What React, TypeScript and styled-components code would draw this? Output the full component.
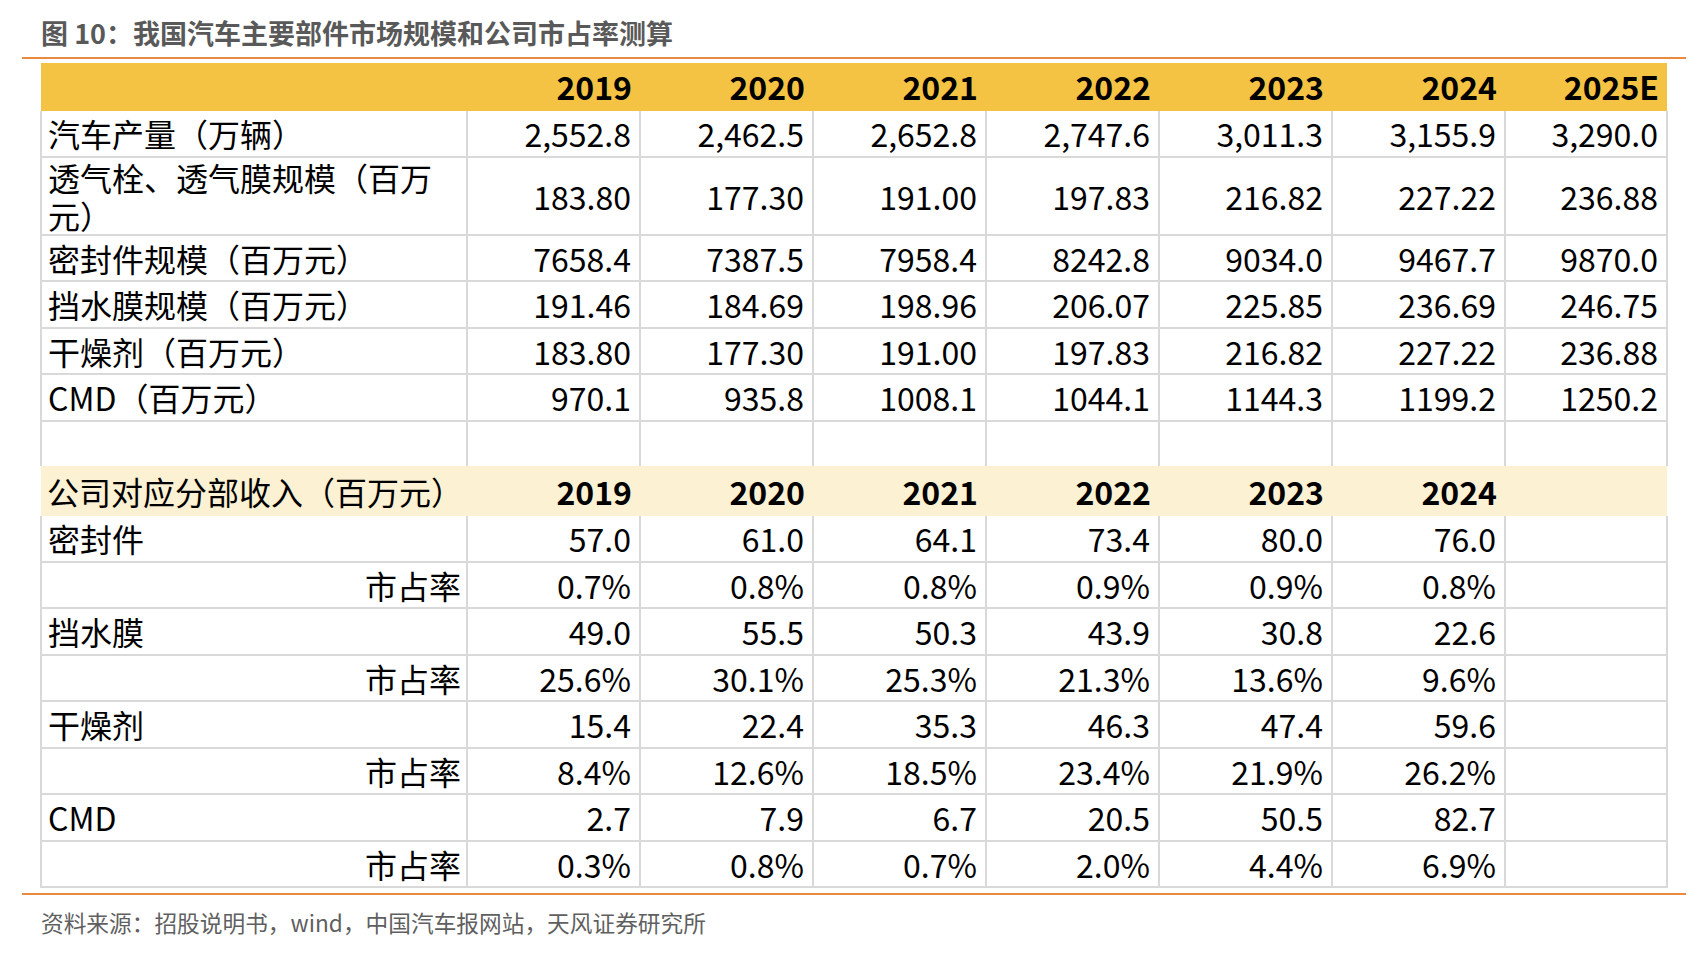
import React from "react";
import styled, { createGlobalStyle } from "styled-components";

const years = ["2019", "2020", "2021", "2022", "2023", "2024", "2025E"];

const marketRows: string[][] = [
  ["汽车产量（万辆）", "2,552.8", "2,462.5", "2,652.8", "2,747.6", "3,011.3", "3,155.9", "3,290.0"],
  ["透气栓、透气膜规模（百万元）", "183.80", "177.30", "191.00", "197.83", "216.82", "227.22", "236.88"],
  ["密封件规模（百万元）", "7658.4", "7387.5", "7958.4", "8242.8", "9034.0", "9467.7", "9870.0"],
  ["挡水膜规模（百万元）", "191.46", "184.69", "198.96", "206.07", "225.85", "236.69", "246.75"],
  ["干燥剂（百万元）", "183.80", "177.30", "191.00", "197.83", "216.82", "227.22", "236.88"],
  ["CMD（百万元）", "970.1", "935.8", "1008.1", "1044.1", "1144.3", "1199.2", "1250.2"],
];

const companyRows: { label: string; share?: boolean; values: string[] }[] = [
  { label: "密封件", values: ["57.0", "61.0", "64.1", "73.4", "80.0", "76.0"] },
  { label: "市占率", share: true, values: ["0.7%", "0.8%", "0.8%", "0.9%", "0.9%", "0.8%"] },
  { label: "挡水膜", values: ["49.0", "55.5", "50.3", "43.9", "30.8", "22.6"] },
  { label: "市占率", share: true, values: ["25.6%", "30.1%", "25.3%", "21.3%", "13.6%", "9.6%"] },
  { label: "干燥剂", values: ["15.4", "22.4", "35.3", "46.3", "47.4", "59.6"] },
  { label: "市占率", share: true, values: ["8.4%", "12.6%", "18.5%", "23.4%", "21.9%", "26.2%"] },
  { label: "CMD", values: ["2.7", "7.9", "6.7", "20.5", "50.5", "82.7"] },
  { label: "市占率", share: true, values: ["0.3%", "0.8%", "0.7%", "2.0%", "4.4%", "6.9%"] },
];

const App = () => {
  return (
    <Page>
      <GlobalStyle />
      <Title>图 10：我国汽车主要部件市场规模和公司市占率测算</Title>
      <Rule />
      <Table>
        <colgroup>
          <col style={{ width: 426 }} />
          {years.map((y) => (
            <col key={y} style={{ width: y === "2025E" ? 162 : 173 }} />
          ))}
        </colgroup>
        <tbody>
          <tr>
            <HeadCell />
            {years.map((y) => (
              <HeadCell key={y}>{y}</HeadCell>
            ))}
          </tr>
          {marketRows.map((row) => (
            <tr key={row[0]}>
              <LabelCell $wrap={row[0].length > 12}>{row[0]}</LabelCell>
              {row.slice(1).map((v, i) => (
                <NumCell key={i}>{v}</NumCell>
              ))}
            </tr>
          ))}
          <tr>
            {years.concat("").map((_, i) => (
              <NumCell key={i} />
            ))}
          </tr>
          <tr>
            <SubHeadCell $left>公司对应分部收入（百万元）</SubHeadCell>
            {years.slice(0, 6).map((y) => (
              <SubHeadCell key={y}>{y}</SubHeadCell>
            ))}
            <SubHeadCell />
          </tr>
          {companyRows.map((row, r) => (
            <tr key={r}>
              <LabelCell $right={row.share}>{row.label}</LabelCell>
              {row.values.map((v, i) => (
                <NumCell key={i}>{v}</NumCell>
              ))}
              <NumCell />
            </tr>
          ))}
        </tbody>
      </Table>
      <Rule />
      <Source>资料来源：招股说明书，wind，中国汽车报网站，天风证券研究所</Source>
    </Page>
  );
};

const GlobalStyle = createGlobalStyle`
  html, body {
    margin: 0;
    padding: 0;
    background: #ffffff;
  }
  body {
    font-family: "Noto Sans CJK SC", "Noto Sans", sans-serif;
  }
`;

const Page = styled.div`
  width: 1698px;
  height: 966px;
  box-sizing: border-box;
  padding: 15px 12px 0 22px;
`;

const Title = styled.div`
  padding-left: 19px;
  font-size: 27px;
  line-height: 36px;
  font-weight: 700;
  color: #595959;
  margin-bottom: 6px;
`;

const Rule = styled.div`
  width: 1664px;
  height: 2px;
  background: #e98a43;
`;

const Table = styled.table`
  margin: 4px 0 5px 18px;
  width: 1626px;
  table-layout: fixed;
  border-collapse: collapse;
  font-size: 32px;
  color: #000000;

  td {
    border: 2px solid #d9d9d9;
    padding: 0 8px 0 6px;
    height: 44.5px;
    line-height: 40px;
    white-space: nowrap;
  }
`;

const HeadCell = styled.td`
  && {
    border-style: hidden;
    background: #f4c343;
    text-align: right;
    font-weight: 700;
    height: 45px;
    padding-bottom: 3px;
  }
`;

const SubHeadCell = styled.td<{ $left?: boolean }>`
  && {
    border-style: hidden;
    background: #fcf1d2;
    text-align: ${(p) => (p.$left ? "left" : "right")};
    font-weight: ${(p) => (p.$left ? 400 : 700)};
    height: 50px;
  }
`;

const LabelCell = styled.td<{ $wrap?: boolean; $right?: boolean }>`
  && {
    text-align: ${(p) => (p.$right ? "right" : "left")};
    padding-right: 5px;
    white-space: ${(p) => (p.$wrap ? "normal" : "nowrap")};
    line-height: ${(p) => (p.$wrap ? "38px" : "40px")};
  }
`;

const NumCell = styled.td`
  text-align: right;
`;

const Source = styled.div`
  padding: 12px 0 0 19px;
  font-size: 22.7px;
  line-height: 32px;
  color: #5f5f5f;
`;

export default App;
